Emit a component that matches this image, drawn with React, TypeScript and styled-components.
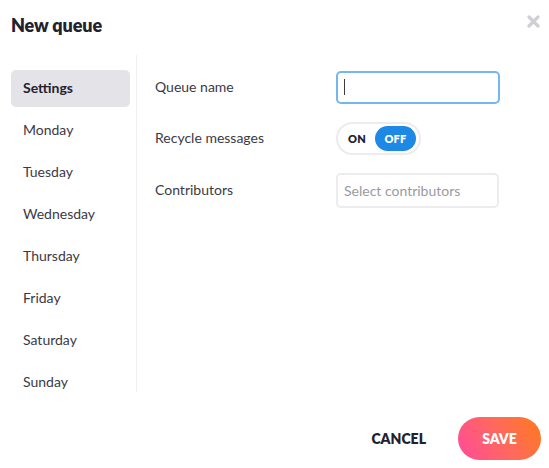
import React, { useState } from 'react';
import styled, { createGlobalStyle } from 'styled-components';

const GlobalStyle = createGlobalStyle`
	body {
		margin: 0;
		background: #fff;
		font-family: Lato, "Liberation Sans", sans-serif;
		color: #2b2b3a;
	}
`;

const Modal = styled.div`
	width: 549px;
	height: 468px;
	display: flex;
	flex-direction: column;
	box-sizing: border-box;
`;

const Header = styled.div`
	display: flex;
	align-items: center;
	justify-content: space-between;
	height: 55px;
	padding: 0 8px 6px 11px;
	box-sizing: border-box;
`;

const Title = styled.h1`
	margin: 0;
	font-size: 18px;
	font-weight: 800;
	color: #22222f;
	letter-spacing: -0.1px;
`;

const CloseBtn = styled.button`
	border: none;
	background: none;
	padding: 0;
	width: 16px;
	height: 16px;
	cursor: pointer;
	display: flex;
	align-items: center;
	justify-content: center;
	margin-top: -6px;
`;

const Body = styled.div`
	display: flex;
	height: 337px;
`;

const Sidebar = styled.nav`
	width: 137px;
	box-sizing: border-box;
	padding: 15px 6px 0 11px;
	border-right: 1px solid #f0f0f2;
	display: flex;
	flex-direction: column;
	gap: 5px;
`;

const NavItem = styled.div<{ $active?: boolean }>`
	height: 37px;
	flex-shrink: 0;
	display: flex;
	align-items: center;
	padding: 0 0 2px 12px;
	box-sizing: border-box;
	border-radius: 5px;
	font-size: 14px;
	font-weight: ${(p) => (p.$active ? 700 : 400)};
	color: ${(p) => (p.$active ? '#22222f' : '#3a3a46')};
	background: ${(p) => (p.$active ? '#e4e4e8' : 'transparent')};
	cursor: pointer;
`;

const Content = styled.div`
	flex: 1;
	padding: 16px 0 0 18px;
	display: grid;
	grid-template-columns: 181px 164px;
	grid-auto-rows: min-content;
	row-gap: 18px;
	align-items: center;
`;

const Label = styled.label`
	font-size: 14px;
	color: #3a3a46;
	margin-top: -3px;
`;

const Field = styled.div`
	position: relative;
`;

const Caret = styled.span`
	position: absolute;
	left: 8px;
	top: 8px;
	width: 1px;
	height: 16px;
	background: #3a3a46;
	pointer-events: none;
`;

const TextInput = styled.input<{ $focused?: boolean }>`
	display: block;
	box-sizing: border-box;
	width: ${(p) => (p.$focused ? '164px' : '163px')};
	height: ${(p) => (p.$focused ? '33px' : '35px')};
	border: 2px solid ${(p) => (p.$focused ? '#74b6ef' : '#ececee')};
	border-radius: 5px;
	padding: 0 6px;
	font-family: inherit;
	font-size: 14px;
	color: #2b2b3a;
	outline: none;
	caret-color: transparent;
	&::placeholder {
		color: #9a9aa2;
	}
`;

const Toggle = styled.div`
	box-sizing: border-box;
	width: 85px;
	height: 33px;
	border: 2px solid #ececee;
	border-radius: 17px;
	display: flex;
	align-items: center;
	padding: 0 2px 0 10px;
	gap: 9px;
`;

const ToggleOpt = styled.span<{ $on?: boolean }>`
	font-size: 11px;
	font-weight: 800;
	letter-spacing: 0.2px;
	height: 25px;
	border-radius: 13px;
	display: flex;
	align-items: center;
	justify-content: center;
	width: ${(p) => (p.$on ? '41px' : 'auto')};
	color: ${(p) => (p.$on ? '#fff' : '#22222f')};
	background: ${(p) => (p.$on ? '#1e88e5' : 'transparent')};
	cursor: pointer;
`;

const Footer = styled.div`
	flex: 1;
	display: flex;
	justify-content: flex-end;
	align-items: flex-start;
	padding: 25px 8px 0 0;
	gap: 32px;
`;

const CancelBtn = styled.button`
	border: none;
	background: none;
	font-family: inherit;
	font-size: 14px;
	font-weight: 800;
	color: #22222f;
	height: 43px;
	padding: 0;
	cursor: pointer;
`;

const SaveBtn = styled.button`
	border: none;
	width: 83px;
	height: 43px;
	border-radius: 22px;
	background: linear-gradient(60deg, #ff4a9c 0%, #ff6a5a 55%, #ff7a1c 100%);
	color: #fff;
	font-family: inherit;
	font-size: 14px;
	font-weight: 800;
	cursor: pointer;
`;

const days = ['Settings', 'Monday', 'Tuesday', 'Wednesday', 'Thursday', 'Friday', 'Saturday', 'Sunday'];

export default function App() {
	const [active, setActive] = useState('Settings');
	const [recycle, setRecycle] = useState(false);
	const [name, setName] = useState('');

	return (
		<Modal>
			<GlobalStyle />
			<Header>
				<Title>New queue</Title>
				<CloseBtn aria-label="Close">
					<svg width="13" height="13" viewBox="0 0 13 13">
						<path d="M2 2 L11 11 M11 2 L2 11" stroke="#cfcfd4" strokeWidth="3.2" strokeLinecap="round" />
					</svg>
				</CloseBtn>
			</Header>
			<Body>
				<Sidebar>
					{days.map((d) => (
						<NavItem key={d} $active={d === active} onClick={() => setActive(d)}>
							{d}
						</NavItem>
					))}
				</Sidebar>
				<Content>
					<Label>Queue name</Label>
					<Field>
						<TextInput $focused value={name} onChange={(e) => setName(e.currentTarget.value)} />
						{name === '' && <Caret />}
					</Field>
					<Label>Recycle messages</Label>
					<Toggle>
						<ToggleOpt $on={recycle} onClick={() => setRecycle(true)}>ON</ToggleOpt>
						<ToggleOpt $on={!recycle} onClick={() => setRecycle(false)}>OFF</ToggleOpt>
					</Toggle>
					<Label>Contributors</Label>
					<TextInput placeholder="Select contributors" />
				</Content>
			</Body>
			<Footer>
				<CancelBtn>CANCEL</CancelBtn>
				<SaveBtn>SAVE</SaveBtn>
			</Footer>
		</Modal>
	);
}
